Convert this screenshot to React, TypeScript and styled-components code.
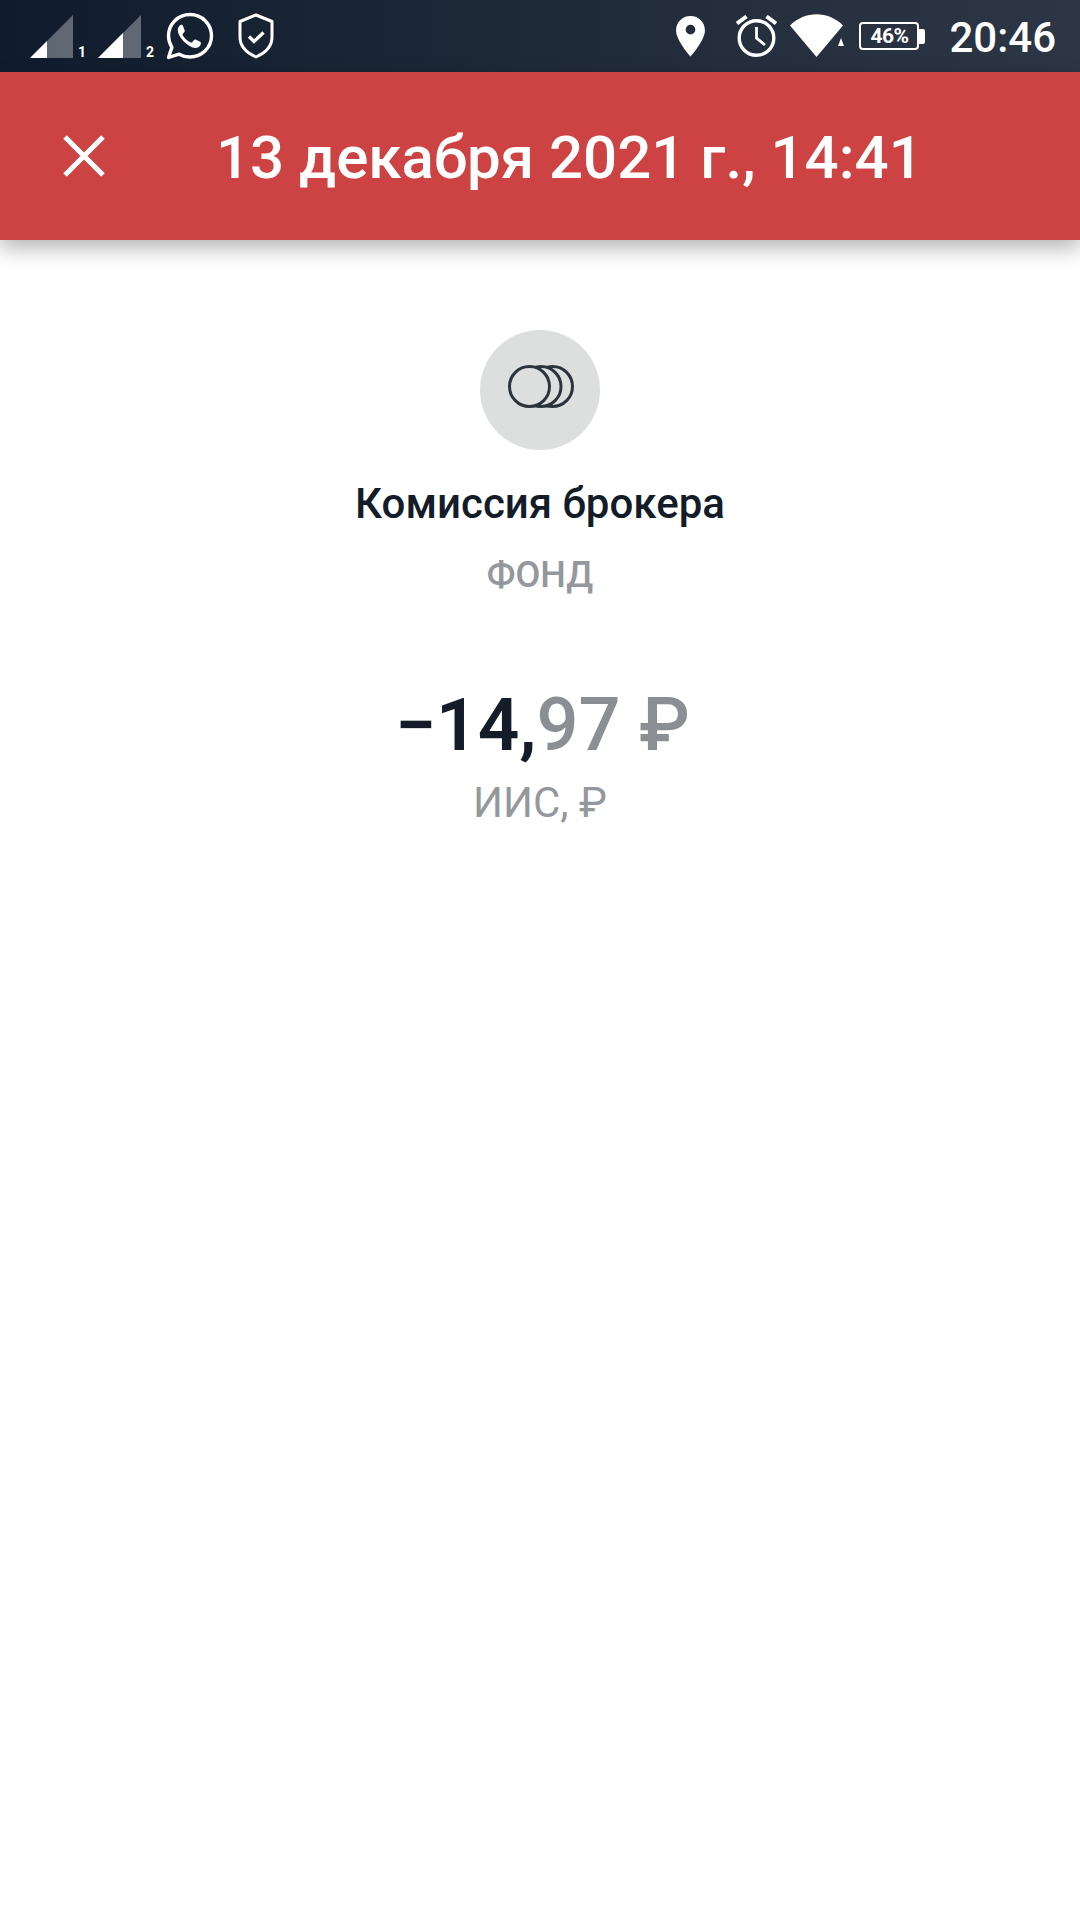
import React from 'react';
import styled, { createGlobalStyle } from 'styled-components';

const GlobalStyle = createGlobalStyle`
  html, body {
    margin: 0;
    padding: 0;
    background: #fff;
    font-family: 'Roboto', 'Liberation Sans', sans-serif;
  }
`;

function SignalIcon({ level, sim }: { level: number; sim: string }) {
  return (
    <SignalWrap>
      <svg width="43" height="43" viewBox="0 0 43 43">
        <path d="M0 43 L43 0 V43 Z" fill="#fff" fillOpacity="0.33" />
        <path d={`M0 43 L${level} ${43 - level} V43 Z`} fill="#fff" />
      </svg>
      <SimNumber>{sim}</SimNumber>
    </SignalWrap>
  );
}

function App() {
  return (
    <Page>
      <GlobalStyle />
      <StatusBar>
        <StatusGroup>
          <SignalIcon level={17} sim="1" />
          <SignalIcon level={25} sim="2" />
          <svg width="48" height="48" viewBox="0 0 48 48" fill="none">
            <path
              d="M24 2.500C12.100 2.500 2.500 12 2.500 23.800c0 4.300 1.200 8.200 3.400 11.600L2.500 45.500l10.600-3.300c3.200 1.800 7 2.800 10.900 2.800 11.900 0 21.500-9.400 21.500-21.200S35.900 2.500 24 2.500Z"
              stroke="#fff"
              strokeWidth="3.400"
              strokeLinejoin="round"
            />
            <path
              d="M16.500 12.500c-1-.1-2 .3-2.800 1.100-1.700 1.700-2.400 4-1.600 6.900 1.500 5.300 7.700 12.200 13.900 14.700 3 1.200 5.800 1 7.600-.9.900-.9 1.400-2.100 1.300-3.300 0-.5-.3-.9-.8-1.200l-4.500-2.200c-.6-.3-1.200-.1-1.600.4l-1.800 2.200c-.4.400-.9.500-1.400.3-3.400-1.400-6.300-4-8.100-7.300-.3-.5-.2-1 .2-1.400l1.500-1.800c.4-.5.5-1 .3-1.600l-1.900-4.800c-.2-.5-.6-.8-1.300-.8Z"
              fill="#fff"
            />
          </svg>
          <ShieldIcon width="36" height="46" viewBox="0 0 36 46" fill="none">
            <path
              d="M18 2 L34 8.500 V24 C34 33 27 40 18 44 C9 40 2 33 2 24 V8.500 Z"
              stroke="#fff"
              strokeWidth="3"
              strokeLinejoin="round"
            />
            <path d="M11 23.500 L16 28.500 L25.500 19.500" stroke="#fff" strokeWidth="3.400" />
          </ShieldIcon>
        </StatusGroup>
        <StatusGroup>
          <svg width="31" height="41" viewBox="0 0 32 44">
            <path
              fillRule="evenodd"
              d="M16 0C7.200 0 .5 6.800.5 15.500.5 26 16 43.500 16 43.500S31.500 26 31.500 15.500C31.500 6.800 24.800 0 16 0Zm0 9.500a5.200 5.200 0 1 1 0 10.400 5.200 5.200 0 0 1 0-10.400Z"
              fill="#fff"
            />
          </svg>
          <AlarmIcon width="41" height="42" viewBox="0 0 41 42" fill="none" stroke="#fff">
            <circle cx="20.500" cy="23" r="17.300" strokeWidth="3.400" />
            <path d="M20.500 12 V23 L29 30" strokeWidth="2.800" />
            <path d="M1 8.500 L10.500 1.500 M40 8.500 L30.500 1.500" strokeWidth="4" />
          </AlarmIcon>
          <WifiIcon width="54" height="44" viewBox="0 0 54 44">
            <path d="M0 11.500 C15 -3.500 38 -3.500 53 11.500 L26.500 43 Z" fill="#fff" />
            <path d="M48 32 L51 24 L54 32 Z" fill="#fff" />
          </WifiIcon>
          <Battery>
            <BatteryBody>46%</BatteryBody>
            <BatteryCap />
          </Battery>
          <Clock>20:46</Clock>
        </StatusGroup>
      </StatusBar>
      <Header>
        <CloseIcon width="42" height="42" viewBox="0 0 42 42" fill="none">
          <path d="M2 2 L40 40 M40 2 L2 40" stroke="#fff" strokeWidth="5" />
        </CloseIcon>
        <HeaderTitle>13 декабря 2021 г., 14:41</HeaderTitle>
      </Header>
      <Content>
        <IconCircle>
          <CoinsIcon width="66" height="43" viewBox="0 0 66 43" fill="#dcdfde" stroke="#2b333c" strokeWidth="3">
            <circle cx="44.500" cy="21.500" r="20" />
            <circle cx="33" cy="21.500" r="20" />
            <circle cx="21.500" cy="21.500" r="20" />
          </CoinsIcon>
        </IconCircle>
        <OperationName>Комиссия брокера</OperationName>
        <Category>ФОНД</Category>
        <Amount>
          −14,<AmountMuted>97 ₽</AmountMuted>
        </Amount>
        <Account>ИИС, ₽</Account>
      </Content>
    </Page>
  );
}

export default App;

const Page = styled.div`
  width: 1080px;
  height: 1920px;
  background: #fff;
  overflow: hidden;
`;

const StatusBar = styled.div`
  height: 72px;
  box-sizing: border-box;
  padding: 12px 24px 0 30px;
  display: flex;
  justify-content: space-between;
  align-items: flex-start;
  background: linear-gradient(90deg, #101c2d 0%, #1f2a39 50%, #2d3644 100%);
`;

const StatusGroup = styled.div`
  display: flex;
  align-items: center;
  height: 48px;
`;

const SignalWrap = styled.div`
  display: flex;
  align-items: flex-end;
  width: 68px;
  height: 43px;
  margin-top: 1px;
`;

const SimNumber = styled.span`
  color: #fff;
  font-size: 14px;
  font-weight: 700;
  line-height: 12px;
  margin-left: 5px;
`;

const ShieldIcon = styled.svg`
  margin-left: 24px;
`;

const AlarmIcon = styled.svg`
  margin-left: 30px;
`;

const WifiIcon = styled.svg`
  margin-left: 13px;
`;

const Battery = styled.div`
  display: flex;
  align-items: center;
  margin-left: 15px;
`;

const BatteryBody = styled.div`
  width: 60px;
  height: 28px;
  box-sizing: border-box;
  border: 2px solid #fff;
  border-radius: 4px;
  color: #fff;
  font-size: 21px;
  font-weight: 700;
  line-height: 24px;
  letter-spacing: -0.5px;
  text-align: center;
`;

const BatteryCap = styled.div`
  width: 6px;
  height: 15px;
  background: #fff;
  border-radius: 0 2px 2px 0;
`;

const Clock = styled.div`
  margin-left: 24px;
  margin-top: 4px;
  color: #fff;
  font-size: 42px;
  font-weight: 500;
  line-height: 48px;
`;

const Header = styled.div`
  height: 168px;
  box-sizing: border-box;
  padding-left: 63px;
  display: flex;
  align-items: center;
  background: #cd4343;
  box-shadow: 0 8px 20px rgba(0, 0, 0, 0.3);
  position: relative;
`;

const CloseIcon = styled.svg`
  flex: none;
`;

const HeaderTitle = styled.div`
  margin-left: 111px;
  margin-top: 2px;
  color: #fff;
  font-size: 60px;
  font-weight: 500;
  white-space: nowrap;
`;

const Content = styled.div`
  padding-top: 90px;
  display: flex;
  flex-direction: column;
  align-items: center;
`;

const IconCircle = styled.div`
  width: 120px;
  height: 120px;
  border-radius: 50%;
  background: #dcdfde;
  display: flex;
  align-items: center;
  justify-content: center;
`;

const CoinsIcon = styled.svg`
  margin-bottom: 7px;
  margin-left: 2px;
`;

const OperationName = styled.div`
  margin-top: 30px;
  color: #131c28;
  font-size: 42px;
  font-weight: 500;
  line-height: 48px;
`;

const Category = styled.div`
  margin-top: 24px;
  color: #94989c;
  font-size: 36px;
  font-weight: 500;
  line-height: 46px;
`;

const Amount = styled.div`
  margin-top: 85px;
  padding-left: 5px;
  color: #131c28;
  font-size: 73px;
  font-weight: 600;
  line-height: 84px;
`;

const AmountMuted = styled.span`
  color: #8b8f93;
  font-size: 74px;
  font-weight: 500;
`;

const Account = styled.div`
  margin-top: 12px;
  color: #94989c;
  font-size: 42px;
  line-height: 48px;
`;
